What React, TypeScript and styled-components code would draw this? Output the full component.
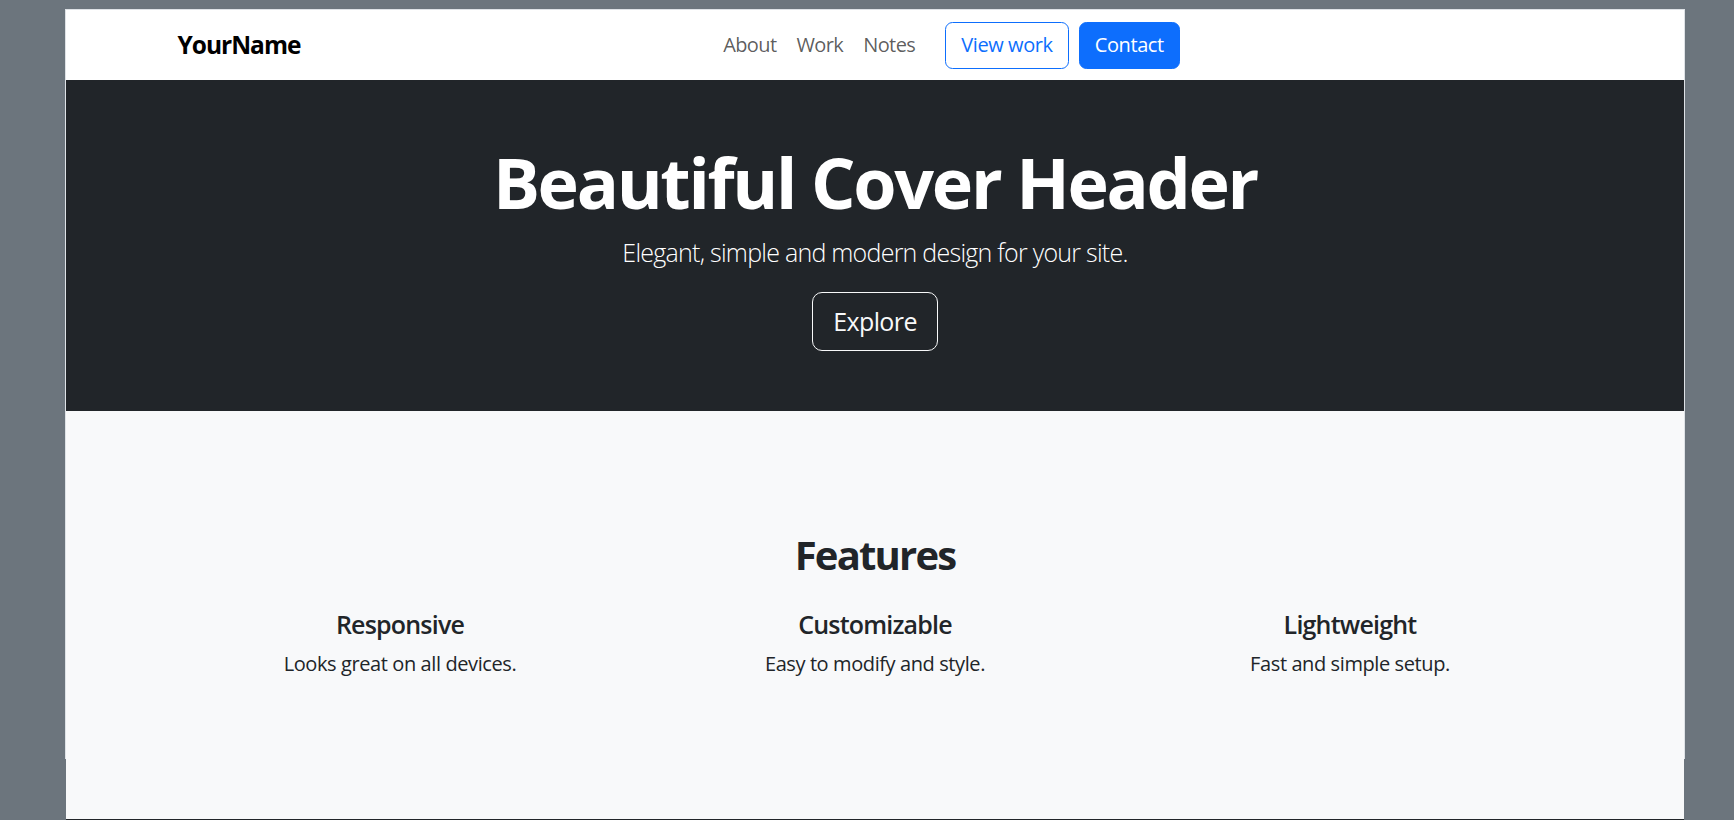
import React from "react";
import styled, { createGlobalStyle } from "styled-components";

const GlobalStyle = createGlobalStyle`
  *, *::before, *::after { box-sizing: border-box; }
  html, body { margin: 0; padding: 0; }
  body {
    background: #6c757d;
    font-family: "Open Sans", "Noto Sans", "DejaVu Sans", sans-serif;
    color: #212529;
    -webkit-font-smoothing: antialiased;
  }
`;

const Viewport = styled.div`
  height: 820px;
  overflow: hidden;
  padding: 9px 49px 0 65px;
`;

const Frame = styled.div`
  height: 750px;
  border: 1px solid #dee2e6;
  background: #ffffff;
`;

const Container = styled.div`
  width: 1425px;
  margin: 0 auto;
  padding: 0 15px;
`;

const Navbar = styled.nav`
  height: 70px;
  background: #ffffff;
  display: flex;
  align-items: center;
`;

const NavInner = styled(Container)`
  display: flex;
  align-items: center;
`;

const Brand = styled.a`
  font-size: 24.5px;
  font-weight: 700;
  line-height: 37.5px;
  color: #000000;
  margin-right: 20px;
  text-decoration: none;
  letter-spacing: -1px;
`;

const Collapse = styled.div`
  flex: 1;
  display: flex;
  justify-content: center;
  align-items: center;
`;

const NavList = styled.ul`
  display: flex;
  list-style: none;
  margin: 0;
  padding: 0;
`;

const NavLink = styled.a`
  display: block;
  padding: 8px 10px;
  font-size: 20px;
  line-height: 30px;
  color: rgba(0, 0, 0, 0.65);
  text-decoration: none;
  letter-spacing: -0.6px;
`;

const ButtonRow = styled.div`
  display: flex;
  gap: 10px;
  margin-left: 20px;
`;

const Button = styled.a<{ $variant: "outline" | "primary" }>`
  display: inline-block;
  font-size: 20px;
  line-height: 30px;
  padding: 7.5px 15px;
  border-radius: 7.5px;
  border: 1px solid #0d6efd;
  text-decoration: none;
  letter-spacing: -0.4px;
  color: ${(p) => (p.$variant === "primary" ? "#ffffff" : "#0d6efd")};
  background: ${(p) => (p.$variant === "primary" ? "#0d6efd" : "transparent")};
`;

const Hero = styled.header`
  background: #212529;
  color: #ffffff;
  text-align: center;
  padding: 60px 0;
`;

const HeroTitle = styled.h1`
  font-size: 70px;
  font-weight: 700;
  line-height: 84px;
  margin: 0 0 10px;
  letter-spacing: -2.3px;
`;

const Lead = styled.p`
  font-size: 25px;
  font-weight: 300;
  line-height: 37.5px;
  margin: 0 0 20px;
  letter-spacing: -0.75px;
`;

const ExploreButton = styled.a`
  display: inline-block;
  font-size: 25px;
  line-height: 37.5px;
  padding: 10px 20px;
  border-radius: 10px;
  border: 1px solid #f8f9fa;
  color: #f8f9fa;
  text-decoration: none;
  letter-spacing: -0.6px;
`;

const FeaturesSection = styled.section`
  background: #f8f9fa;
  padding: 120px 0;
  text-align: center;
`;

const SectionTitle = styled.h2`
  font-size: 40px;
  font-weight: 700;
  line-height: 48px;
  margin: 0 0 30px;
  letter-spacing: -1.8px;
`;

const FeatureRow = styled.div`
  display: grid;
  grid-template-columns: repeat(3, 1fr);
  margin: 0 -15px;
`;

const FeatureCol = styled.div`
  padding: 0 15px;
`;

const FeatureTitle = styled.h5`
  font-size: 25px;
  font-weight: 600;
  line-height: 30px;
  margin: 0 0 10px;
  letter-spacing: -0.8px;
`;

const FeatureText = styled.p`
  font-size: 20px;
  line-height: 30px;
  margin: 0 0 20px;
  letter-spacing: -0.4px;
`;

const Footer = styled.footer`
  background: #212529;
  height: 80px;
`;

const features = [
  { title: "Responsive", text: "Looks great on all devices." },
  { title: "Customizable", text: "Easy to modify and style." },
  { title: "Lightweight", text: "Fast and simple setup." },
];

export default function App() {
  return (
    <>
      <GlobalStyle />
      <Viewport>
        <Frame>
          <Navbar>
            <NavInner>
              <Brand href="#">YourName</Brand>
              <Collapse>
                <NavList>
                  <li><NavLink href="#">About</NavLink></li>
                  <li><NavLink href="#">Work</NavLink></li>
                  <li><NavLink href="#">Notes</NavLink></li>
                </NavList>
                <ButtonRow>
                  <Button $variant="outline" href="#">View work</Button>
                  <Button $variant="primary" href="#">Contact</Button>
                </ButtonRow>
              </Collapse>
            </NavInner>
          </Navbar>
          <Hero>
            <HeroTitle>Beautiful Cover Header</HeroTitle>
            <Lead>Elegant, simple and modern design for your site.</Lead>
            <ExploreButton href="#">Explore</ExploreButton>
          </Hero>
          <FeaturesSection>
            <Container>
              <SectionTitle>Features</SectionTitle>
              <FeatureRow>
                {features.map((f) => (
                  <FeatureCol key={f.title}>
                    <FeatureTitle>{f.title}</FeatureTitle>
                    <FeatureText>{f.text}</FeatureText>
                  </FeatureCol>
                ))}
              </FeatureRow>
            </Container>
          </FeaturesSection>
          <Footer />
        </Frame>
      </Viewport>
    </>
  );
}
